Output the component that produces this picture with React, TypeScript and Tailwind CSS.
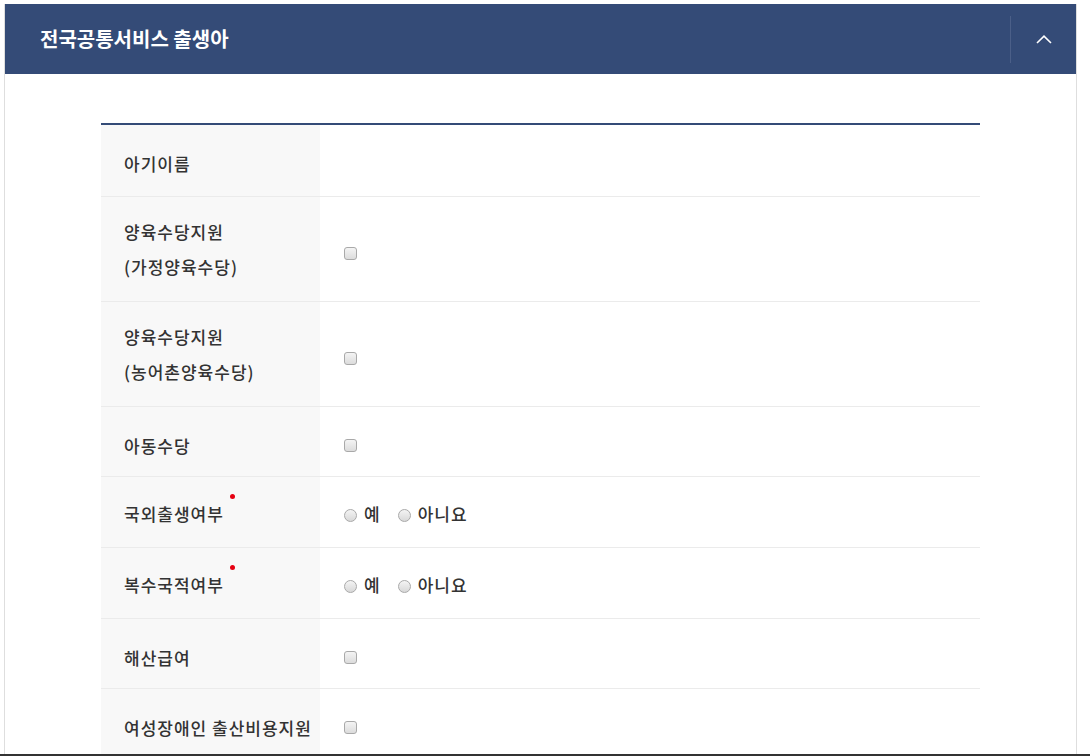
import { useState } from "react"

type Row = { label: string[]; type: "none" | "check" | "radio"; required?: boolean }

const rows: Row[] = [
  { label: ["아기이름"], type: "none" },
  { label: ["양육수당지원", "(가정양육수당)"], type: "check" },
  { label: ["양육수당지원", "(농어촌양육수당)"], type: "check" },
  { label: ["아동수당"], type: "check" },
  { label: ["국외출생여부"], type: "radio", required: true },
  { label: ["복수국적여부"], type: "radio", required: true },
  { label: ["해산급여"], type: "check" },
  { label: ["여성장애인 출산비용지원"], type: "check" },
]

function Check() {
  return (
    <span className="mt-[8px] inline-block h-[13px] w-[13px] rounded-[3px] border border-[#a9a9a9] bg-gradient-to-b from-[#f4f4f4] to-[#dcdcdc]" />
  )
}

function Radio({ label }: { label: string }) {
  return (
    <span className="flex items-center gap-[7px]">
      <span className="mt-[4px] inline-block h-[13px] w-[13px] rounded-full border border-[#a9a9a9] bg-gradient-to-b from-[#f4f4f4] to-[#d8d8d8]" />
      <span>{label}</span>
    </span>
  )
}

export default function App() {
  const [open] = useState(true)

  return (
    <div className="h-[756px] overflow-hidden bg-white font-['Malgun_Gothic','Noto_Sans_CJK_KR',sans-serif]">
      <div className="h-[754px] overflow-hidden pl-[4px] pr-[13px] pt-[4px]">
        <div className="h-full border-x border-[#dedede]">
          {/* Header */}
          <div className="flex h-[70px] items-center bg-[#344b77]">
            <h2 className="ml-[35px] flex-1 text-[20px] font-bold text-white">전국공통서비스 출생아</h2>
            <div className="h-[47px] w-px bg-[#4b5f88]" />
            <button className="flex w-[65px] items-center justify-center">
              <svg width="16" height="9" viewBox="0 0 16 9" fill="none" stroke="white" strokeWidth="1.6">
                <path d={open ? "M1 8 8 1.2 15 8" : "M1 1 8 7.8 15 1"} />
              </svg>
            </button>
          </div>

          {/* Table */}
          <div className="px-[96px] pt-[49px]">
            <div className="border-t-2 border-[#344b77]">
              {rows.map((row, i) => {
                const single = row.label.length === 1
                const radio = row.type === "radio"
                return (
                  <div
                    key={i}
                    className={`flex border-b border-[#ebebeb] text-[17px] font-medium leading-[35px] tracking-[1px] text-[#333] ${
                      i === 0 ? "min-h-[72px]" : radio ? "min-h-[71px]" : ""
                    }`}
                  >
                    <div
                      className={`w-[219px] shrink-0 bg-[#f8f8f8] pl-[23px] ${
                        radio ? "pb-[13px] pt-[19px]" : single ? "pb-[13px] pt-[21px]" : "py-[17px]"
                      }`}
                    >
                      {row.label.map((l, j) => (
                        <div key={j} className="relative w-fit">
                          {l}
                          {row.required && (
                            <span className="absolute -right-[11px] top-[-2px] h-[5px] w-[5px] rounded-full bg-[#e60012]" />
                          )}
                        </div>
                      ))}
                    </div>
                    <div className="flex items-center pl-[24px]">
                      {row.type === "check" && <Check />}
                      {radio && (
                        <div className="flex items-center gap-[17px] pt-[2px]">
                          <Radio label="예" />
                          <Radio label="아니요" />
                        </div>
                      )}
                    </div>
                  </div>
                )
              })}
            </div>
          </div>
        </div>
      </div>
      <div className="h-[2px] bg-[#333]" />
    </div>
  )
}
